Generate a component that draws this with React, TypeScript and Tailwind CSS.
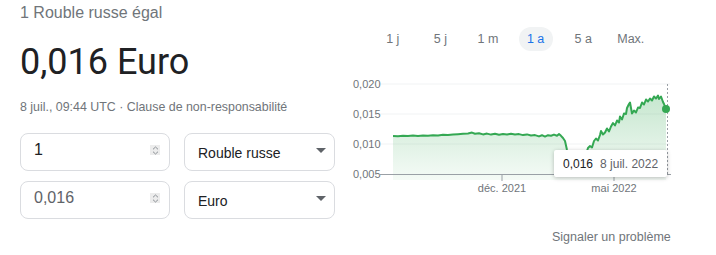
import React from "react";

const ranges = ["1 j", "5 j", "1 m", "1 a", "5 a", "Max."];

// rough shape of the 1-year RUB/EUR curve, page coords
const points: [number, number][] = [
  [393, 136], [398, 136.3], [403, 135.8], [408, 136.1], [413, 135.6], [418, 135.9],
  [423, 135.5], [428, 135.7], [433, 135.2], [438, 135.4], [443, 134.8], [448, 135], [453, 134.5],
  [458, 134.2], [463, 133.8], [468, 133.4], [472, 132.6], [475, 133.8], [479, 133.2],
  [483, 134.4], [487, 133.6], [491, 134.6], [495, 133.8], [499, 134.8], [503, 134.1],
  [507, 134.6], [511, 133.7], [515, 134.5], [519, 134.1], [523, 135.1], [527, 134.4],
  [531, 135.5], [535, 135.1], [539, 136.4], [542, 135.2], [545, 136.6], [548, 135.2],
  [551, 135.8], [554, 134.6], [557, 135.7], [559, 134.1], [561, 135.8], [563, 138],
  [565, 141], [567, 150], [570, 160], [575, 165], [580, 163], [585, 157], [588, 148],
  [590, 146], [592, 147.5], [594, 141], [596, 138.5], [598, 140.5], [600, 135], [601, 131],
  [603, 134.5], [605, 132.5], [607, 128.5], [609, 131.5], [611, 126.5], [613, 123], [615, 125.5],
  [617, 120.5], [619, 122.5], [620, 116.5], [622, 119.5], [624, 113.5], [626, 114], [627, 108],
  [629, 104], [630, 102.5], [632, 113.5], [634, 110.5], [636, 112.5], [638, 107.5], [640, 108],
  [642, 102.5], [644, 104.5], [646, 99.5], [648, 101.5], [650, 98.5], [652, 100.5], [654, 96.5],
  [656, 98.5], [658, 95.5], [659, 99], [661, 96.5], [663, 102], [664, 104], [666, 109],
];

const linePath = points.map(([x, y], i) => `${i ? "L" : "M"}${x} ${y}`).join(" ");
const areaPath = `${linePath} L666 180 L393 180 Z`;

function Spinner() {
  return (
    <div className="w-[10px] h-[10px] bg-[#ececec] flex items-center justify-center">
      <svg width="7" height="9" viewBox="0 0 7 9" fill="none" stroke="#80868b" strokeWidth="0.9">
        <path d="M1 3.3 L3.5 1 L6 3.3" />
        <path d="M1 5.7 L3.5 8 L6 5.7" />
      </svg>
    </div>
  );
}

function Caret() {
  return (
    <svg width="10" height="5" viewBox="0 0 10 5">
      <path d="M0 0 L10 0 L5 5 Z" fill="#5f6368" />
    </svg>
  );
}

function AmountBox({ value, muted }: { value: string; muted?: boolean }) {
  return (
    <div className="w-[150px] h-[38px] border border-[#dadce0] rounded-[8px] flex items-center pl-[13px] pr-[9px]">
      <span className={`flex-1 text-[16px] -mt-[4px] ${muted ? "text-[#5f6368]" : "text-[#202124]"}`}>
        {value}
      </span>
      <div className="-mt-[4px]">
        <Spinner />
      </div>
    </div>
  );
}

function CurrencyBox({ label }: { label: string }) {
  return (
    <div className="w-[151px] h-[38px] border border-[#dadce0] rounded-[8px] flex items-center pl-[13px] pr-[8px]">
      <span className="flex-1 text-[14px] text-[#202124] mt-[3px]">{label}</span>
      <div className="-mt-[3px]">
        <Caret />
      </div>
    </div>
  );
}

function Chart() {
  const grid = [84, 114, 144];
  const labels = [
    { y: 88, t: "0,020" },
    { y: 118, t: "0,015" },
    { y: 148, t: "0,010" },
    { y: 178, t: "0,005" },
  ];
  return (
    <svg width="350" height="125" viewBox="340 75 350 125" className="block">
      <defs>
        <linearGradient id="fill" x1="0" y1="0" x2="0" y2="1">
          <stop offset="0%" stopColor="#34a853" stopOpacity="0.28" />
          <stop offset="100%" stopColor="#34a853" stopOpacity="0.05" />
        </linearGradient>
      </defs>
      {grid.map((y) => (
        <line key={y} x1="379" x2="670" y1={y} y2={y} stroke="#f1f3f4" strokeWidth="1" />
      ))}
      {labels.map((l) => (
        <text key={l.t} x="353" y={l.y} fontSize="11" fill="#70757a" fontFamily="Arial, 'Liberation Sans', sans-serif">
          {l.t}
        </text>
      ))}
      <path d={areaPath} fill="url(#fill)" />
      <path d={linePath} fill="none" stroke="#34a853" strokeWidth="2" strokeLinejoin="round" />
      <line x1="379" x2="671" y1="174.5" y2="174.5" stroke="#9aa0a6" strokeWidth="1.2" />
      <line x1="502" x2="502" y1="174" y2="181" stroke="#9aa0a6" strokeWidth="1" />
      <line x1="614" x2="614" y1="174" y2="181" stroke="#9aa0a6" strokeWidth="1" />
      <line x1="667.5" x2="667.5" y1="84" y2="174" stroke="#9aa0a6" strokeWidth="1" strokeDasharray="2 2" />
      <circle cx="666" cy="109" r="4" fill="#34a853" />
      <text x="502" y="192" fontSize="11" fill="#70757a" textAnchor="middle" fontFamily="Arial, 'Liberation Sans', sans-serif">
        déc. 2021
      </text>
      <text x="614" y="192" fontSize="11" fill="#70757a" textAnchor="middle" fontFamily="Arial, 'Liberation Sans', sans-serif">
        mai 2022
      </text>
    </svg>
  );
}

export default function App() {
  return (
    <div className="w-[716px] h-[255px] bg-white flex font-['Arial','Liberation_Sans',sans-serif] overflow-hidden">
      <div className="w-[340px] pl-[20px] pt-[3px]">
        <div className="text-[16px] text-[#70757a] leading-[20px]">1 Rouble russe égal</div>
        <div className="text-[36px] text-[#202124] leading-[44px] mt-[17px] font-['Roboto',sans-serif]">
          0,016 Euro
        </div>
        <div className="text-[12.4px] text-[#70757a] leading-[16px] mt-[15px]">
          8 juil., 09:44 UTC · Clause de non-responsabilité
        </div>
        <div className="mt-[18px] flex flex-col gap-[10px]">
          <div className="flex gap-[14px]">
            <AmountBox value="1" />
            <CurrencyBox label="Rouble russe" />
          </div>
          <div className="flex gap-[14px]">
            <AmountBox value="0,016" muted />
            <CurrencyBox label="Euro" />
          </div>
        </div>
      </div>

      <div className="flex-1 relative">
        <div className="flex items-center pl-[29px] mt-[27px] h-[24px] text-[12.5px] text-[#70757a]">
          {ranges.map((r) => (
            <div key={r} className="w-[47.6px] flex justify-center">
              <div
                className={`h-[24px] flex items-center justify-center rounded-full ${
                  r === "1 a" ? "w-[34px] bg-[#f1f3f4] text-[#1a73e8]" : ""
                }`}
              >
                {r}
              </div>
            </div>
          ))}
        </div>
        <div className="mt-[24px]">
          <Chart />
        </div>
        <div className="absolute left-[214px] top-[150px] h-[27px] px-[9px] bg-white shadow-[0_1px_4px_rgba(0,0,0,0.25)] rounded-[2px] flex items-center gap-[7px] text-[12px]">
          <span className="text-[#202124]">0,016</span>
          <span className="text-[#5f6368]">8 juil. 2022</span>
        </div>
        <div className="absolute left-[212px] top-[228px] text-[12.5px] text-[#70757a]">Signaler un problème</div>
      </div>
    </div>
  );
}
